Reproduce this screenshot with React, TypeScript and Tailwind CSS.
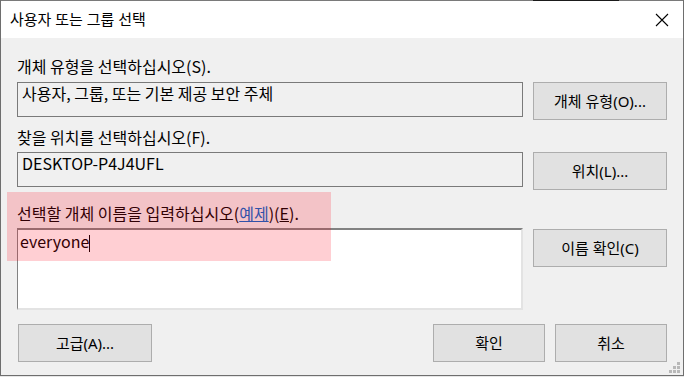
import React from "react";

const font = { fontFamily: '"Noto Sans", "Noto Sans CJK KR", sans-serif' };
const bodyFont = { fontFamily: '"Noto Sans CJK KR", sans-serif' };

function Btn({ children, w = "w-[134px]", className = "" }: { children: React.ReactNode; w?: string; className?: string }) {
  return (
    <div
      className={
        "h-[38px] flex items-center justify-center bg-[#e1e1e1] border border-[#adadad] text-[15px] text-black " +
        w +
        " " +
        className
      }
      style={font}
    >
      {children}
    </div>
  );
}

export default function App() {
  return (
    <div className="w-[684px] h-[377px] bg-[#e6e6e6] overflow-hidden" style={font}>
      <div className="relative w-[684px] h-[376px] border-l border-r border-b border-[#6e6e6e] bg-[#f0f0f0] flex flex-col">
        {/* top border */}
        <div className="h-px flex">
          <div className="w-[532px] bg-[#7a7a7a]" />
          <div className="w-[86px] bg-[#1a1a1a]" />
          <div className="flex-1 bg-[#7a7a7a]" />
        </div>
        {/* title bar */}
        <div className="h-[37px] bg-white flex items-center justify-between pl-[9px] pr-[14px]">
          <span className="text-[15px] text-black leading-none">사용자 또는 그룹 선택</span>
          <svg width="14" height="14" viewBox="0 0 14 14">
            <path d="M1 1 L13 13 M13 1 L1 13" stroke="#000" strokeWidth="1.1" fill="none" />
          </svg>
        </div>
        {/* body */}
        <div className="flex-1 flex flex-col pl-[16px] pr-[16px] pt-[18px] text-[16px] text-black" style={bodyFont}>
          <div className="h-[20px] leading-[20px]">개체 유형을 선택하십시오(S).</div>
          <div className="mt-[6px] flex gap-[10px]">
            <div className="w-[506px] h-[35px] border border-[#7a7a7a] pl-[4px] leading-[20px]">
              사용자, 그룹, 또는 기본 제공 보안 주체
            </div>
            <Btn>개체 유형(O)...</Btn>
          </div>
          <div className="mt-[7px] h-[20px] leading-[20px]">찾을 위치를 선택하십시오(F).</div>
          <div className="mt-[5px] flex gap-[10px]">
            <div className="w-[506px] h-[35px] border border-[#7a7a7a] pl-[4px] leading-[20px]">
              DESKTOP-P4J4UFL
            </div>
            <Btn>위치(L)...</Btn>
          </div>
          <div className="mt-[13px] h-[20px] leading-[20px]">
            선택할 개체 이름을 입력하십시오(<span className="text-[#0066cc] underline">예제</span>)(<span className="underline">E</span>).
          </div>
          <div className="mt-[5px] flex gap-[10px] items-start">
            <div className="w-[506px] h-[82px] bg-white border-t-2 border-l border-[#828282] border-r-2 border-b-2 border-r-[#e3e3e3] border-b-[#e3e3e3] pl-[2px] pt-[1px] leading-[20px]">
              <span>everyone</span>
              <span className="inline-block w-px h-[17px] bg-black align-middle" />
            </div>
            <Btn className="mt-px">이름 확인(C)</Btn>
          </div>
          <div className="mt-[14px] flex">
            <Btn className="ml-px">고급(A)...</Btn>
            <div className="flex-1" />
            <Btn w="w-[112px]">확인</Btn>
            <Btn w="w-[112px]" className="ml-[10px]">취소</Btn>
          </div>
        </div>
        {/* resize grip */}
        <div className="absolute right-[3px] bottom-[2px] grid grid-cols-3 gap-px w-[11px] h-[11px]">
          <span />
          <span />
          <span className="bg-[#b8b8b8]" />
          <span />
          <span className="bg-[#b8b8b8]" />
          <span className="bg-[#b8b8b8]" />
          <span className="bg-[#b8b8b8]" />
          <span className="bg-[#b8b8b8]" />
          <span className="bg-[#b8b8b8]" />
        </div>
        {/* highlight overlay */}
        <div className="absolute left-[6px] top-[192px] w-[324px] h-[69px] bg-[rgba(255,0,20,0.19)]" />
      </div>
    </div>
  );
}
